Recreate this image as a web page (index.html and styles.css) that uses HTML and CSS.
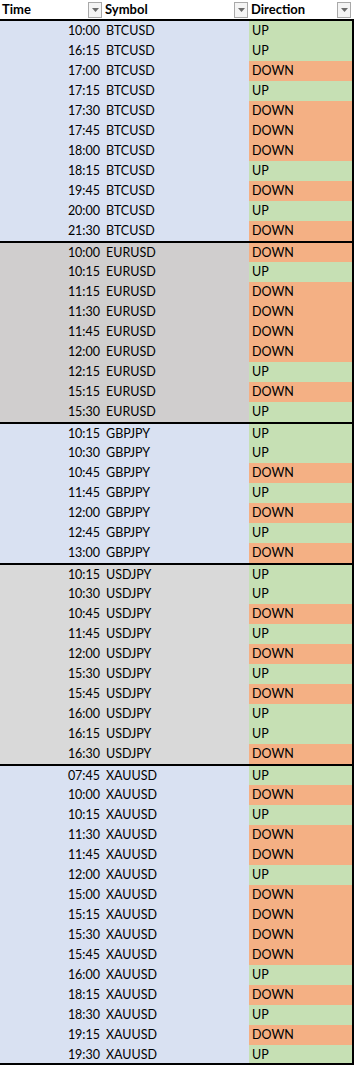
FILE: index.html
```html
<!DOCTYPE html>
<html>
<head>
<meta charset="utf-8">
<link rel="stylesheet" href="styles.css">
</head>
<body>
<div class="sheet">
  <div class="row head">
    <div class="cell hc time-h">Time<span class="dd"><svg width="7" height="4" viewBox="0 0 7 4"><path d="M0 0H7L3.5 4Z" fill="#6b6b6b"/></svg></span></div>
    <div class="cell hc sym-h">Symbol<span class="dd"><svg width="7" height="4" viewBox="0 0 7 4"><path d="M0 0H7L3.5 4Z" fill="#6b6b6b"/></svg></span></div>
    <div class="cell hc dir-h">Direction<span class="dd"><svg width="7" height="4" viewBox="0 0 7 4"><path d="M0 0H7L3.5 4Z" fill="#6b6b6b"/></svg></span></div>
  </div>

  <div class="group blue">
    <div class="row"><div class="cell t">10:00</div><div class="cell s">BTCUSD</div><div class="cell d up">UP</div></div>
    <div class="row"><div class="cell t">16:15</div><div class="cell s">BTCUSD</div><div class="cell d up">UP</div></div>
    <div class="row"><div class="cell t">17:00</div><div class="cell s">BTCUSD</div><div class="cell d down">DOWN</div></div>
    <div class="row"><div class="cell t">17:15</div><div class="cell s">BTCUSD</div><div class="cell d up">UP</div></div>
    <div class="row"><div class="cell t">17:30</div><div class="cell s">BTCUSD</div><div class="cell d down">DOWN</div></div>
    <div class="row"><div class="cell t">17:45</div><div class="cell s">BTCUSD</div><div class="cell d down">DOWN</div></div>
    <div class="row"><div class="cell t">18:00</div><div class="cell s">BTCUSD</div><div class="cell d down">DOWN</div></div>
    <div class="row"><div class="cell t">18:15</div><div class="cell s">BTCUSD</div><div class="cell d up">UP</div></div>
    <div class="row"><div class="cell t">19:45</div><div class="cell s">BTCUSD</div><div class="cell d down">DOWN</div></div>
    <div class="row"><div class="cell t">20:00</div><div class="cell s">BTCUSD</div><div class="cell d up">UP</div></div>
    <div class="row"><div class="cell t">21:30</div><div class="cell s">BTCUSD</div><div class="cell d down">DOWN</div></div>
  </div>

  <div class="group gray">
    <div class="row"><div class="cell t">10:00</div><div class="cell s">EURUSD</div><div class="cell d down">DOWN</div></div>
    <div class="row"><div class="cell t">10:15</div><div class="cell s">EURUSD</div><div class="cell d up">UP</div></div>
    <div class="row"><div class="cell t">11:15</div><div class="cell s">EURUSD</div><div class="cell d down">DOWN</div></div>
    <div class="row"><div class="cell t">11:30</div><div class="cell s">EURUSD</div><div class="cell d down">DOWN</div></div>
    <div class="row"><div class="cell t">11:45</div><div class="cell s">EURUSD</div><div class="cell d down">DOWN</div></div>
    <div class="row"><div class="cell t">12:00</div><div class="cell s">EURUSD</div><div class="cell d down">DOWN</div></div>
    <div class="row"><div class="cell t">12:15</div><div class="cell s">EURUSD</div><div class="cell d up">UP</div></div>
    <div class="row"><div class="cell t">15:15</div><div class="cell s">EURUSD</div><div class="cell d down">DOWN</div></div>
    <div class="row"><div class="cell t">15:30</div><div class="cell s">EURUSD</div><div class="cell d up">UP</div></div>
  </div>

  <div class="group blue">
    <div class="row"><div class="cell t">10:15</div><div class="cell s">GBPJPY</div><div class="cell d up">UP</div></div>
    <div class="row"><div class="cell t">10:30</div><div class="cell s">GBPJPY</div><div class="cell d up">UP</div></div>
    <div class="row"><div class="cell t">10:45</div><div class="cell s">GBPJPY</div><div class="cell d down">DOWN</div></div>
    <div class="row"><div class="cell t">11:45</div><div class="cell s">GBPJPY</div><div class="cell d up">UP</div></div>
    <div class="row"><div class="cell t">12:00</div><div class="cell s">GBPJPY</div><div class="cell d down">DOWN</div></div>
    <div class="row"><div class="cell t">12:45</div><div class="cell s">GBPJPY</div><div class="cell d up">UP</div></div>
    <div class="row"><div class="cell t">13:00</div><div class="cell s">GBPJPY</div><div class="cell d down">DOWN</div></div>
  </div>

  <div class="group lgray">
    <div class="row"><div class="cell t">10:15</div><div class="cell s">USDJPY</div><div class="cell d up">UP</div></div>
    <div class="row"><div class="cell t">10:30</div><div class="cell s">USDJPY</div><div class="cell d up">UP</div></div>
    <div class="row"><div class="cell t">10:45</div><div class="cell s">USDJPY</div><div class="cell d down">DOWN</div></div>
    <div class="row"><div class="cell t">11:45</div><div class="cell s">USDJPY</div><div class="cell d up">UP</div></div>
    <div class="row"><div class="cell t">12:00</div><div class="cell s">USDJPY</div><div class="cell d down">DOWN</div></div>
    <div class="row"><div class="cell t">15:30</div><div class="cell s">USDJPY</div><div class="cell d up">UP</div></div>
    <div class="row"><div class="cell t">15:45</div><div class="cell s">USDJPY</div><div class="cell d down">DOWN</div></div>
    <div class="row"><div class="cell t">16:00</div><div class="cell s">USDJPY</div><div class="cell d up">UP</div></div>
    <div class="row"><div class="cell t">16:15</div><div class="cell s">USDJPY</div><div class="cell d up">UP</div></div>
    <div class="row"><div class="cell t">16:30</div><div class="cell s">USDJPY</div><div class="cell d down">DOWN</div></div>
  </div>

  <div class="group blue last">
    <div class="row"><div class="cell t">07:45</div><div class="cell s">XAUUSD</div><div class="cell d up">UP</div></div>
    <div class="row"><div class="cell t">10:00</div><div class="cell s">XAUUSD</div><div class="cell d down">DOWN</div></div>
    <div class="row"><div class="cell t">10:15</div><div class="cell s">XAUUSD</div><div class="cell d up">UP</div></div>
    <div class="row"><div class="cell t">11:30</div><div class="cell s">XAUUSD</div><div class="cell d down">DOWN</div></div>
    <div class="row"><div class="cell t">11:45</div><div class="cell s">XAUUSD</div><div class="cell d down">DOWN</div></div>
    <div class="row"><div class="cell t">12:00</div><div class="cell s">XAUUSD</div><div class="cell d up">UP</div></div>
    <div class="row"><div class="cell t">15:00</div><div class="cell s">XAUUSD</div><div class="cell d down">DOWN</div></div>
    <div class="row"><div class="cell t">15:15</div><div class="cell s">XAUUSD</div><div class="cell d down">DOWN</div></div>
    <div class="row"><div class="cell t">15:30</div><div class="cell s">XAUUSD</div><div class="cell d down">DOWN</div></div>
    <div class="row"><div class="cell t">15:45</div><div class="cell s">XAUUSD</div><div class="cell d down">DOWN</div></div>
    <div class="row"><div class="cell t">16:00</div><div class="cell s">XAUUSD</div><div class="cell d up">UP</div></div>
    <div class="row"><div class="cell t">18:15</div><div class="cell s">XAUUSD</div><div class="cell d down">DOWN</div></div>
    <div class="row"><div class="cell t">18:30</div><div class="cell s">XAUUSD</div><div class="cell d up">UP</div></div>
    <div class="row"><div class="cell t">19:15</div><div class="cell s">XAUUSD</div><div class="cell d down">DOWN</div></div>
    <div class="row"><div class="cell t">19:30</div><div class="cell s">XAUUSD</div><div class="cell d up">UP</div></div>
  </div>
</div>
</body>
</html>
```

FILE: styles.css
```css
html, body {
  margin: 0;
  padding: 0;
  background: #ffffff;
}
body {
  font-family: "Lato", "Liberation Sans", sans-serif;
  font-size: 12.5px;
  color: #000;
}
.sheet {
  width: 354px;
}
.row {
  display: grid;
  grid-template-columns: 103px 146px 103px;
  height: 20px;
  line-height: 20px;
}
.head {
  height: 19px;
  line-height: 19px;
  border-bottom: 2px solid #000;
  background: #fff;
  font-weight: bold;
}
.cell {
  white-space: nowrap;
  overflow: hidden;
}
.hc {
  display: flex;
  justify-content: space-between;
  align-items: center;
  padding-left: 2px;
  padding-right: 1px;
  font-size: 13px;
}
.dd {
  width: 14px;
  height: 16px;
  box-sizing: border-box;
  border: 1px solid #a9a9a9;
  background: #f4f4f4;
  display: flex;
  align-items: center;
  justify-content: center;
}
.group {
  border-right: 2px solid #000;
}
.group + .group {
  border-top: 2px solid #000;
}
.group + .group .row:first-child {
  height: 19px;
  line-height: 19px;
}
.group.last {
  border-bottom: 2px solid #000;
}
.group.last .row:last-child {
  height: 18px;
  line-height: 19px;
}
.blue { background: #d9e1f2; }
.gray { background: #d0cece; }
.lgray { background: #d9d9d9; }
.t {
  text-align: right;
  padding-right: 3px;
}
.s {
  padding-left: 3px;
}
.d {
  padding-left: 3px;
}
.up { background: #c6e0b4; }
.down { background: #f4b084; }
```
